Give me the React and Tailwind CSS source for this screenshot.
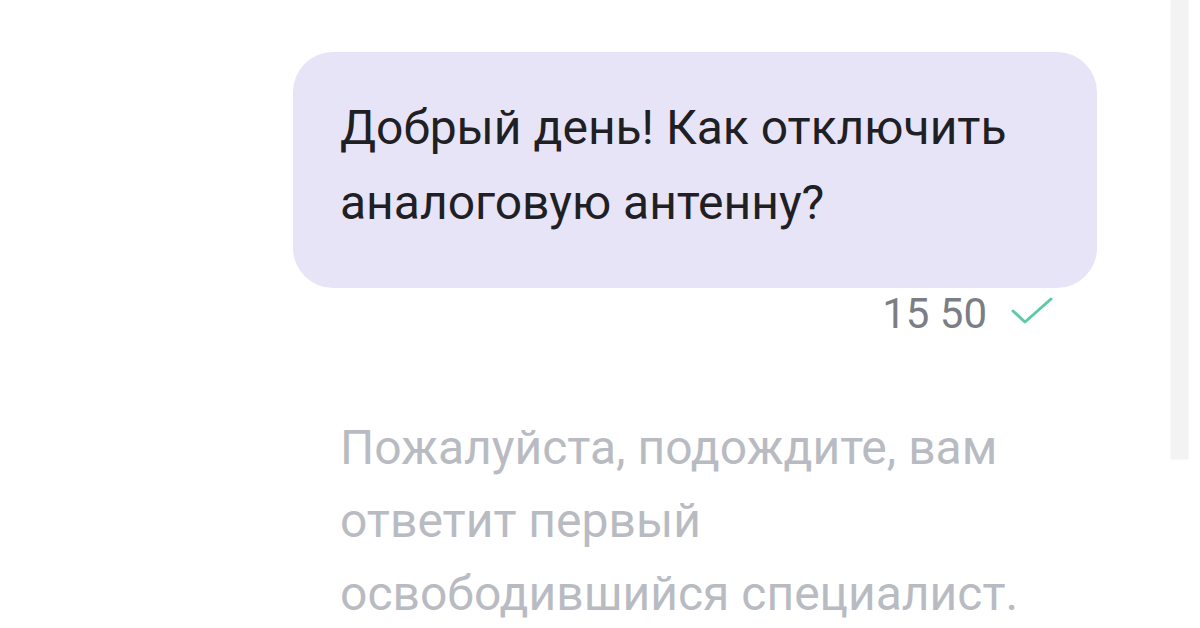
export default function App() {
  return (
    <div
      className="relative w-[1200px] h-[628px] overflow-hidden bg-white"
      style={{ fontFamily: "Roboto, 'Noto Sans', sans-serif" }}
    >
      <div className="absolute top-0 left-[1171px] w-[17px] h-[459px] bg-[#f3f3f3] shadow-[0_0_2px_rgba(0,0,0,0.08)]" />
      <div className="flex flex-col pl-[293px] pr-[103px] pt-[52px]">
        <div className="bg-[#e8e4f8] rounded-[40px] px-[47px] pt-[38px] pb-[48px] text-[#1f2024] text-[48px] leading-[75px]">
          Добрый день! Как отключить
          <br />
          аналоговую антенну?
        </div>
        <div className="flex items-center justify-end gap-[24px] pr-[44px] mt-[4px] h-[44px]">
          <span className="text-[42px] leading-[44px] text-[#7b7e86]">15 50</span>
          <svg width="42" height="30" viewBox="0 0 42 30" fill="none" className="-mt-[6px]">
            <path d="M2 15 L14 26 L40 3" stroke="#5ec9a5" strokeWidth="3" strokeLinecap="round" strokeLinejoin="round" />
          </svg>
        </div>
        <div className="pl-[47px] mt-[75px] text-[48px] leading-[73px] text-[#b9bbc2]">
          Пожалуйста, подождите, вам
          <br />
          ответит первый
          <br />
          освободившийся специалист.
        </div>
      </div>
    </div>
  );
}
